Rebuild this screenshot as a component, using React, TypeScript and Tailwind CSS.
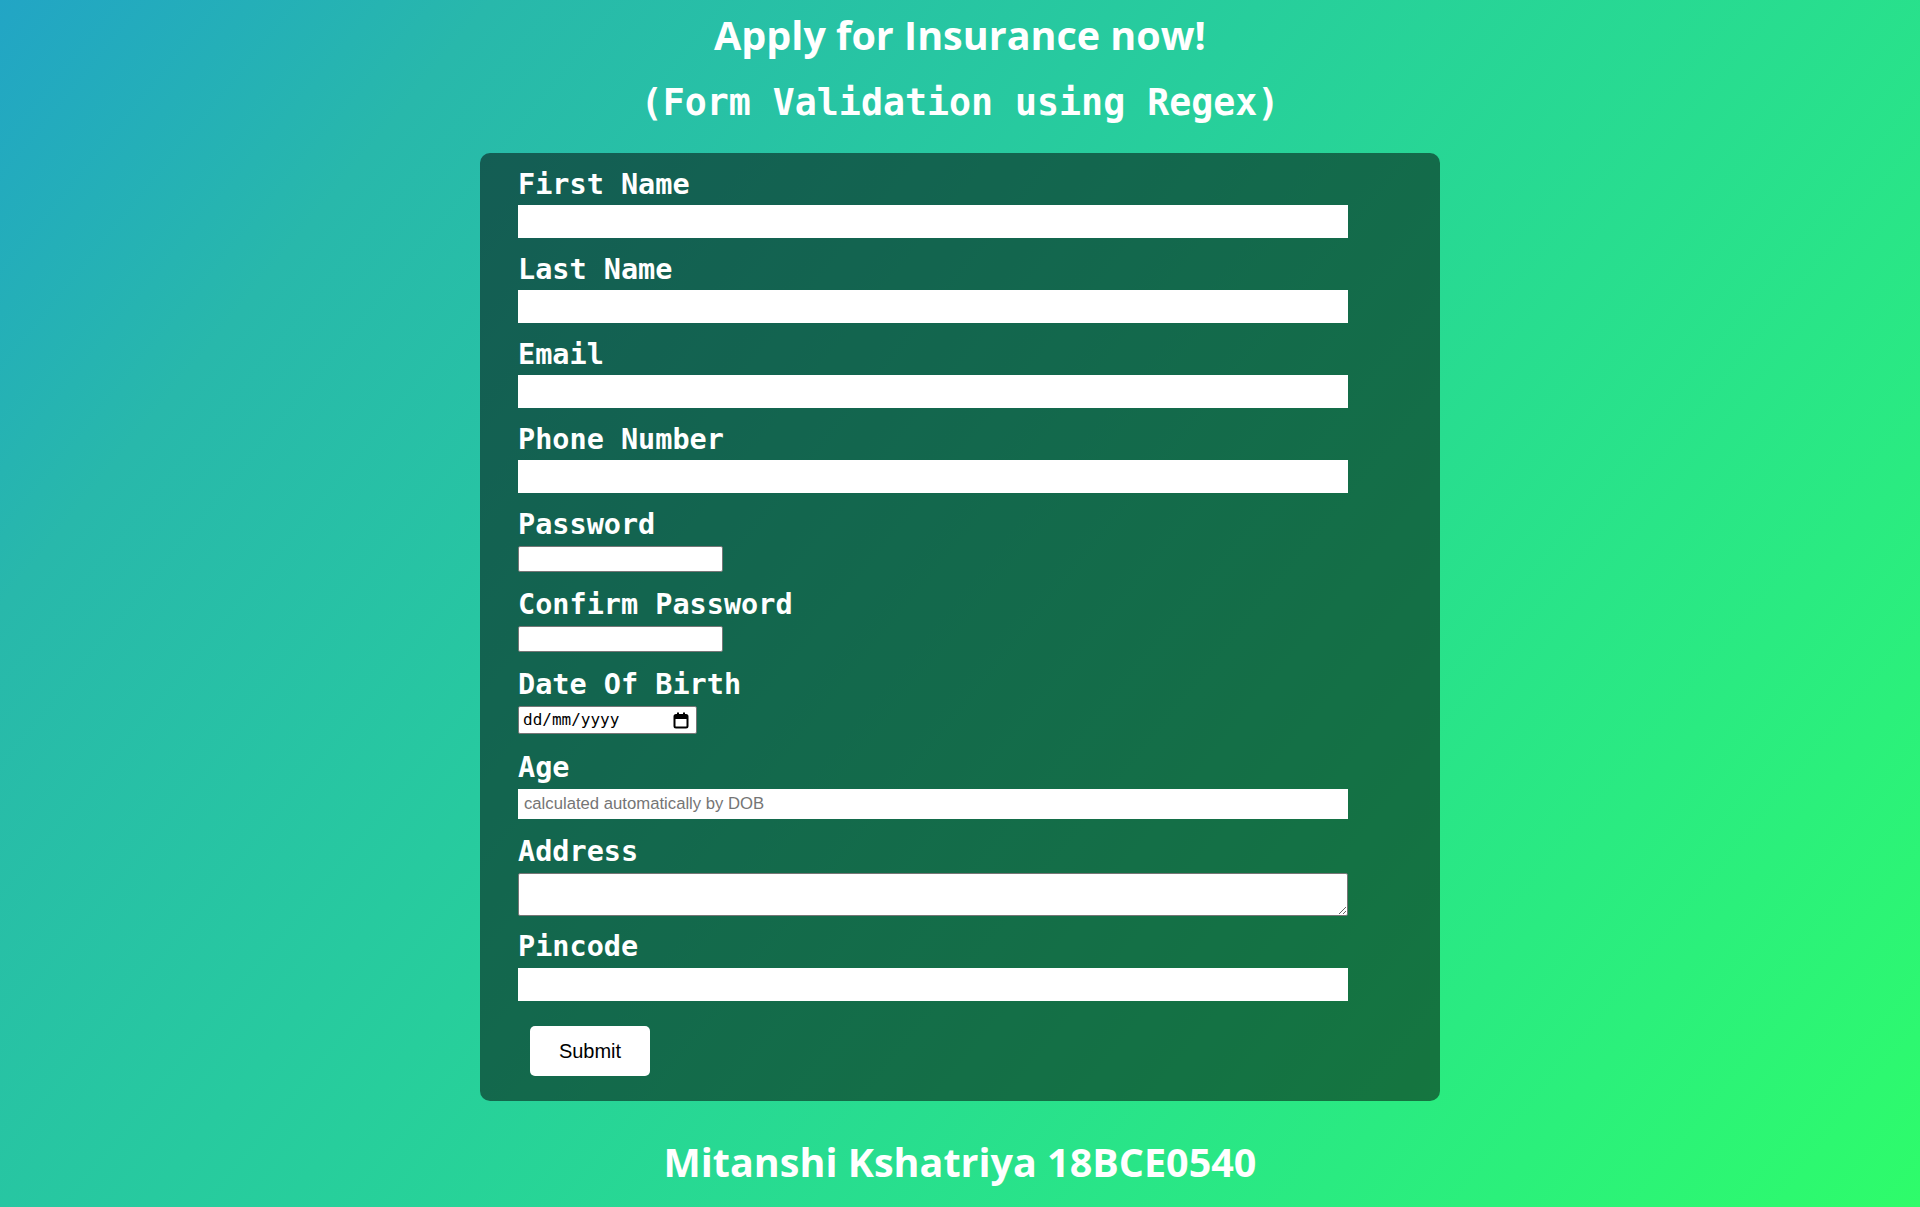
import React from 'react';

const labelFont = { fontFamily: '"DejaVu Sans Mono", monospace' };
const headFont = { fontFamily: '"Comic Sans MS", "Open Sans", sans-serif' };
const arial = { fontFamily: '"Liberation Sans", Arial, sans-serif' };

type FieldProps = {
  label: string;
  children: React.ReactNode;
  gap: string;
};

const Field: React.FC<FieldProps> = ({ label, children, gap }) => (
  <div className={gap}>
    <label
      className="block text-[28.5px] leading-[30px] font-bold text-white whitespace-pre"
      style={labelFont}
    >
      {label}
    </label>
    {children}
  </div>
);

const CalendarIcon = () => (
  <svg width="16" height="17" viewBox="0 0 16 17">
    <rect x="1.5" y="3" width="13" height="12.5" rx="1.5" fill="none" stroke="black" strokeWidth="2" />
    <rect x="1.5" y="3" width="13" height="4" fill="black" />
    <rect x="4" y="0.5" width="2" height="3" fill="black" />
    <rect x="10" y="0.5" width="2" height="3" fill="black" />
  </svg>
);

const App: React.FC = () => {
  return (
    <div className="min-h-screen w-full bg-linear-129 from-[#22a5c5] via-[#28b8ab] via-17% to-[#2efc6a] flex flex-col items-center">
      <h1 className="pt-[10px] text-[39.5px] leading-[50px] font-bold text-white" style={headFont}>
        Apply for Insurance now!
      </h1>
      <h2
        className="mt-[22px] mb-[29px] text-[36.6px] leading-[42px] font-bold text-white"
        style={labelFont}
      >
        (Form Validation using Regex)
      </h2>

      <form className="w-[960px] rounded-[10px] bg-black/50 pt-[17px] pl-[38px] pb-[25px]">
        <Field label="First Name" gap="mb-[17px]">
          <input type="text" className="block mt-[5px] w-[830px] h-[33px] bg-white" />
        </Field>
        <Field label="Last Name" gap="mb-[17px]">
          <input type="text" className="block mt-[5px] w-[830px] h-[33px] bg-white" />
        </Field>
        <Field label="Email" gap="mb-[17px]">
          <input type="email" className="block mt-[5px] w-[830px] h-[33px] bg-white" />
        </Field>
        <Field label="Phone Number" gap="mb-[17px]">
          <input type="text" className="block mt-[5px] w-[830px] h-[33px] bg-white" />
        </Field>
        <Field label="Password" gap="mb-[18px]">
          <input
            type="password"
            className="block mt-[6px] w-[205px] h-[26px] bg-white border border-[#767676] rounded-[2px]"
          />
        </Field>
        <Field label="Confirm Password" gap="mb-[18px]">
          <input
            type="password"
            className="block mt-[6px] w-[205px] h-[26px] bg-white border border-[#767676] rounded-[2px]"
          />
        </Field>
        <Field label="Date Of Birth" gap="mb-[19px]">
          <div className="mt-[6px] w-[179px] h-[28px] bg-white border border-[#767676] rounded-[2px] flex items-center justify-between pl-[4px] pr-[7px]">
            <span className="text-[16px] text-black" style={labelFont}>
              dd/mm/yyyy
            </span>
            <CalendarIcon />
          </div>
        </Field>
        <Field label="Age" gap="mb-[18px]">
          <input
            type="text"
            readOnly
            placeholder="calculated automatically by DOB"
            className="block mt-[6px] w-[830px] h-[30px] bg-white px-[6px] text-[16.7px] placeholder:text-[#757575]"
            style={arial}
          />
        </Field>
        <Field label="Address" gap="mb-[16px]">
          <textarea className="block mt-[6px] w-[830px] h-[43px] bg-white border border-[#767676] rounded-[2px]" />
        </Field>
        <Field label="Pincode" gap="">
          <input type="text" className="block mt-[6px] w-[830px] h-[33px] bg-white" />
        </Field>
        <button
          type="button"
          className="block mt-[25px] ml-[12px] w-[120px] h-[50px] bg-white rounded-[5px] text-[20px] text-black"
          style={arial}
        >
          Submit
        </button>
      </form>

      <h1 className="mt-[36px] text-[39.5px] leading-[50px] font-bold text-white" style={headFont}>
        Mitanshi Kshatriya 18BCE0540
      </h1>
    </div>
  );
};

export default App;
